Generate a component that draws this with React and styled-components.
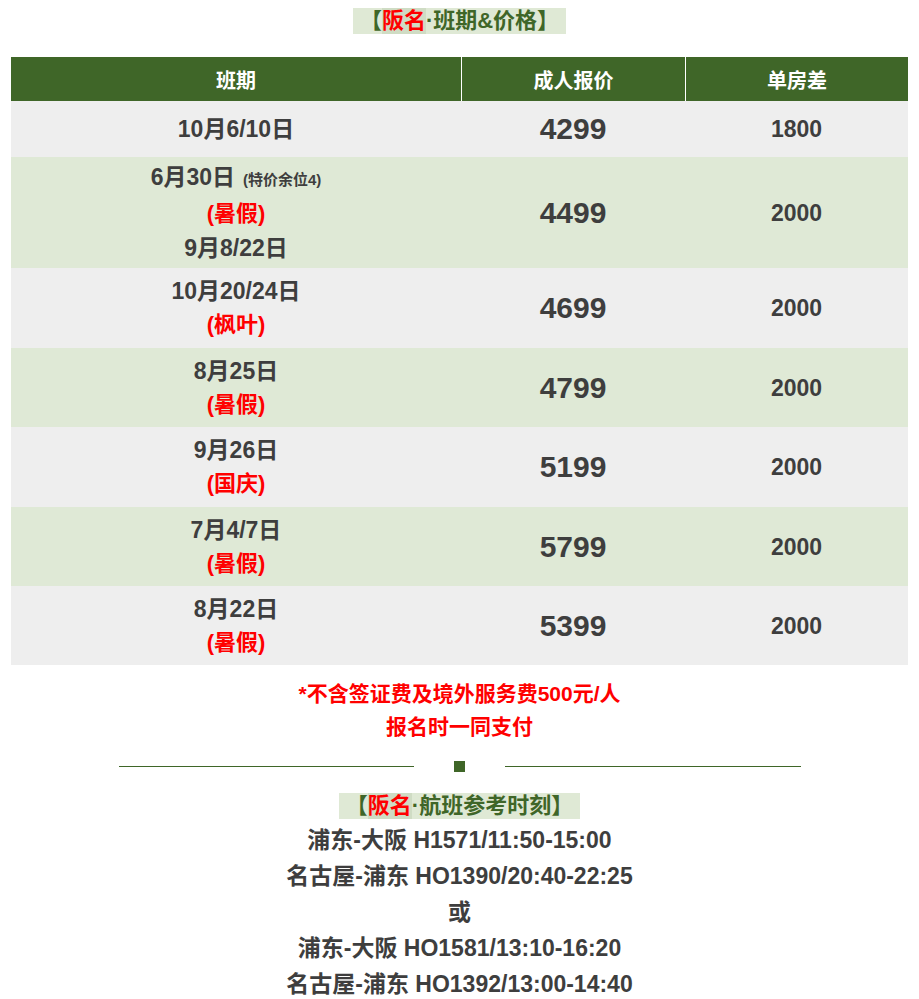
import React from 'react';
import styled, { createGlobalStyle } from 'styled-components';

const GlobalStyle = createGlobalStyle`
  body {
    margin: 0;
    background: #fff;
    font-family: 'Liberation Sans', 'Noto Sans CJK SC', sans-serif;
    color: #3e3e3e;
  }
`;

const Page = styled.div`
  width: 919px;
  padding: 8px 11px 0;
  box-sizing: border-box;
  display: flex;
  flex-direction: column;
  align-items: center;
`;

const SectionTitle = styled.div`
  display: inline-flex;
  align-items: center;
  background: #dfe9d5;
  color: #3f6628;
  font-size: 22px;
  font-weight: bold;
  line-height: 26px;
  padding: 0 7px;
`;

const Red = styled.span`
  color: #ff0000;
  background: ${(p) => (p.$hl ? '#cfdcc4' : 'transparent')};
`;

const Holiday = styled.div`
  color: #ff0000;
  font-size: 22px;
`;

const Table = styled.div`
  width: 100%;
  margin-top: 23px;
  display: grid;
  grid-template-columns: 450px 224px 223px;
`;

const HeadCell = styled.div`
  background: #3f6628;
  color: #fff;
  font-size: 20px;
  font-weight: bold;
  height: 44px;
  display: flex;
  align-items: center;
  justify-content: center;
  border-left: ${(p) => (p.$first ? 'none' : '1px solid #fff')};
`;

const Cell = styled.div`
  background: ${(p) => (p.$alt ? '#dfe9d6' : '#eeeeee')};
  height: ${(p) => p.$h}px;
  display: flex;
  flex-direction: column;
  align-items: center;
  justify-content: center;
  font-weight: bold;
  font-size: ${(p) => p.$size || 23}px;
  line-height: 34px;
`;

const Small = styled.span`
  font-size: 15px;
  font-weight: bold;
  margin-left: 8px;
`;

const Note = styled.div`
  margin-top: 12px;
  color: #ff0000;
  font-size: 21px;
  font-weight: bold;
  line-height: 33px;
  text-align: center;
`;

const Divider = styled.div`
  width: 682px;
  margin-top: 18px;
  display: flex;
  align-items: center;
  gap: 40px;
`;

const Line = styled.div`
  flex: 1;
  height: 1px;
  background: #3f6628;
`;

const Square = styled.div`
  width: 11px;
  height: 11px;
  background: #3f6628;
`;

const FlightTitle = styled(SectionTitle)`
  margin-top: 21px;
`;

const Flights = styled.div`
  margin-top: 3px;
  font-size: 23px;
  font-weight: bold;
  line-height: 36px;
  text-align: center;
  color: #3e3e3e;
`;

const rows = [
  { h: 56, dates: [['10月6/10日']], price: '4299', single: '1800' },
  { h: 111, dates: [['6月30日', '(特价余位4)'], ['(暑假)', 'red'], ['9月8/22日']], price: '4499', single: '2000' },
  { h: 80, dates: [['10月20/24日'], ['(枫叶)', 'red']], price: '4699', single: '2000' },
  { h: 79, dates: [['8月25日'], ['(暑假)', 'red']], price: '4799', single: '2000' },
  { h: 80, dates: [['9月26日'], ['(国庆)', 'red']], price: '5199', single: '2000' },
  { h: 79, dates: [['7月4/7日'], ['(暑假)', 'red']], price: '5799', single: '2000' },
  { h: 79, dates: [['8月22日'], ['(暑假)', 'red']], price: '5399', single: '2000' },
];

const flights = [
  '浦东-大阪 H1571/11:50-15:00',
  '名古屋-浦东 HO1390/20:40-22:25',
  '或',
  '浦东-大阪 HO1581/13:10-16:20',
  '名古屋-浦东 HO1392/13:00-14:40',
];

const App = () => (
  <>
    <GlobalStyle />
    <Page>
      <SectionTitle>
        【<Red $hl>阪名</Red>·班期&amp;价格】
      </SectionTitle>
      <Table>
        <HeadCell $first>班期</HeadCell>
        <HeadCell>成人报价</HeadCell>
        <HeadCell>单房差</HeadCell>
        {rows.map((r, i) => {
          const alt = i % 2 === 1;
          return (
            <React.Fragment key={i}>
              <Cell $alt={alt} $h={r.h}>
                {r.dates.map(([t, extra], j) =>
                  extra === 'red' ? (
                    <Holiday key={j}>{t}</Holiday>
                  ) : (
                    <div key={j}>
                      {t}
                      {extra && <Small>{extra}</Small>}
                    </div>
                  )
                )}
              </Cell>
              <Cell $alt={alt} $h={r.h} $size={30}>{r.price}</Cell>
              <Cell $alt={alt} $h={r.h}>{r.single}</Cell>
            </React.Fragment>
          );
        })}
      </Table>
      <Note>
        *不含签证费及境外服务费500元/人
        <br />
        报名时一同支付
      </Note>
      <Divider>
        <Line />
        <Square />
        <Line />
      </Divider>
      <FlightTitle>
        【<Red $hl>阪名</Red>·航班参考时刻】
      </FlightTitle>
      <Flights>
        {flights.map((f) => (
          <div key={f}>{f}</div>
        ))}
      </Flights>
    </Page>
  </>
);

export default App;
